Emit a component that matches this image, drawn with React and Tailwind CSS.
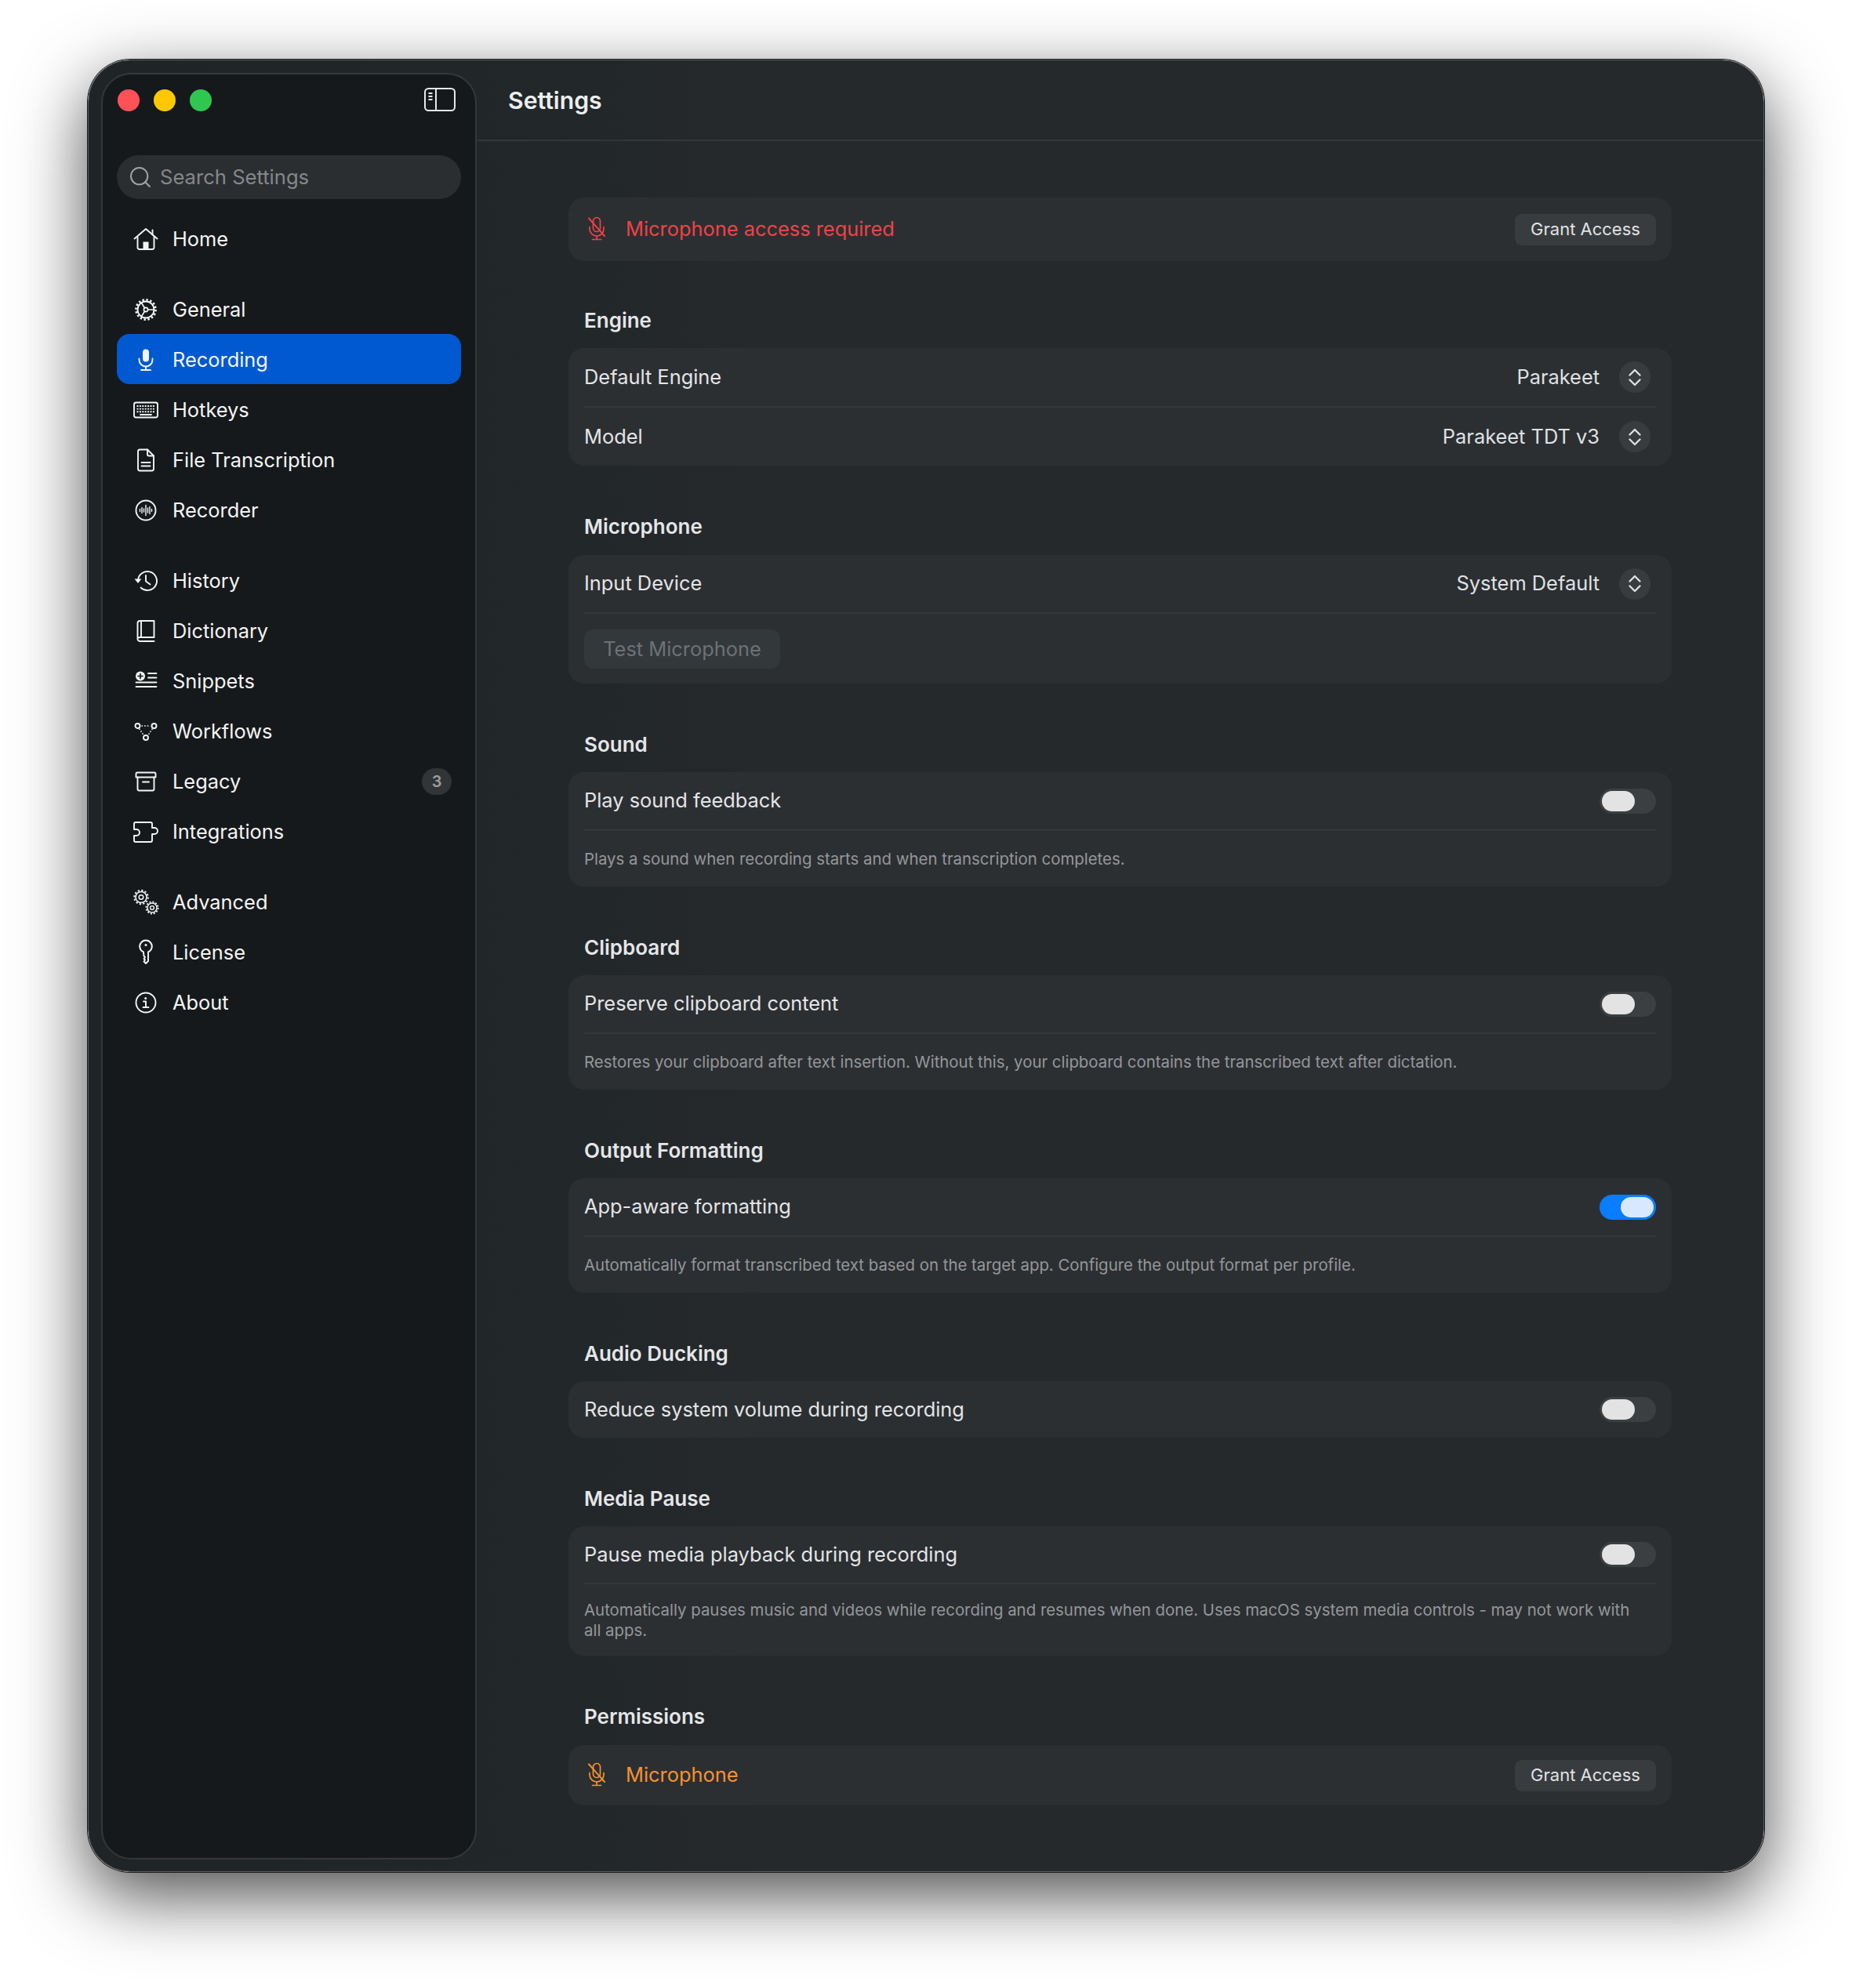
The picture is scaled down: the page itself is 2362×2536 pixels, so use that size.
import React from 'react';
import { Search } from 'lucide-react';

// every icon is drawn in a 34x34 box, centred on the sidebar's icon column
const Ico = ({ children, className = 'w-[34px] h-[34px]' }) => (
  <svg viewBox="0 0 34 34" fill="none" stroke="currentColor" strokeWidth="1.9" strokeLinecap="round" strokeLinejoin="round" className={className}>
    {children}
  </svg>
);

const HomeIcon = () => (
  <Ico>
    <path d="M2.5 16.5 17 4l14.5 12.5" />
    <path d="M6.5 14v13.5a2.5 2.5 0 0 0 2.5 2.5h16a2.5 2.5 0 0 0 2.5-2.5V14" />
    <path d="M25.5 5.5v6" />
    <rect x="13.5" y="20.5" width="7" height="9.5" fill="currentColor" stroke="none" />
  </Ico>
);

const GeneralIcon = () => (
  <Ico>
    <circle cx="17" cy="17" r="10.5" />
    <circle cx="17" cy="17" r="12.6" strokeWidth="2.6" strokeDasharray="2.4 2.55" strokeLinecap="butt" />
    <circle cx="17" cy="17" r="2.6" strokeWidth="1.6" />
    <path d="M11.5 8.5 15.6 15M11.5 25.5l4.1-6.5M19.6 17H27" strokeWidth="1.6" />
  </Ico>
);

const MicIcon = () => (
  <Ico>
    <rect x="13" y="3.5" width="8" height="16" rx="4" fill="currentColor" stroke="none" />
    <path d="M8.5 15.5v1.5a8.5 8.5 0 0 0 17 0v-1.5" />
    <path d="M17 25.5v4M11 30h12" />
  </Ico>
);

const KeyboardIcon = () => (
  <Ico>
    <rect x="2" y="7.5" width="30" height="19" rx="2.5" />
    <path d="M5.5 12h23M5.5 15.6h23M5.5 19.2h23" strokeWidth="1.9" strokeDasharray="2 1.4" strokeLinecap="butt" />
    <path d="M10 23h14" strokeWidth="1.8" />
  </Ico>
);

const FileIcon = () => (
  <Ico>
    <path d="M19 3.5H9.5A2.5 2.5 0 0 0 7 6v22a2.5 2.5 0 0 0 2.5 2.5h15A2.5 2.5 0 0 0 27 28V11.5L19 3.5Z" />
    <path d="M19 3.5v6a2 2 0 0 0 2 2h6" />
    <path d="M11.5 20h11M11.5 24.5h11" />
  </Ico>
);

const RecorderIcon = () => (
  <Ico>
    <circle cx="17" cy="17" r="12.5" />
    <path d="M9.5 15.5v3M12 13.5v7M14.5 15v4M17 10.5v13M19.5 14v6M22 12.5v9M24.5 15.5v3" strokeWidth="1.4" />
  </Ico>
);

const HistoryIcon = () => (
  <Ico>
    <path d="M7 17a12 12 0 1 1 3.6 8.6" />
    <path d="M2.5 14.5h9L7 20Z" fill="currentColor" stroke="none" />
    <path d="M17 10v7.5l5.5 4" />
  </Ico>
);

const BookIcon = () => (
  <Ico>
    <path d="M6.5 26.5V7a3 3 0 0 1 3-3h18v21H9.5a3 3 0 0 0-3 1.5 3 3 0 0 0 3 3.5h18" />
    <path d="M11 4v21" />
  </Ico>
);

const SnippetsIcon = () => (
  <Ico>
    <circle cx="10" cy="10.5" r="6" fill="currentColor" stroke="none" />
    <path d="M10 7.5v6M7 10.5h6" stroke="#16191b" strokeWidth="1.7" />
    <path d="M20 7h10.5M20 12.5h10.5M4.5 18.5h26M4.5 24h26" strokeWidth="1.8" />
  </Ico>
);

const WorkflowIcon = () => (
  <Ico>
    <circle cx="6.5" cy="10" r="3" />
    <circle cx="27.5" cy="10" r="3" />
    <circle cx="17" cy="25" r="3" />
    <path d="M11.5 10h11M8.5 13.5l5.5 8M25.5 13.5l-5.5 8" strokeWidth="1.5" strokeDasharray="1.6 2" strokeLinecap="butt" />
  </Ico>
);

const ArchiveIcon = () => (
  <Ico>
    <path d="M4.5 11.5V7A1.5 1.5 0 0 1 6 5.5h22A1.5 1.5 0 0 1 29.5 7v4.5Z" />
    <path d="M6.5 11.5v15a2 2 0 0 0 2 2h17a2 2 0 0 0 2-2v-15" />
    <path d="M13 17.5h8" />
  </Ico>
);

const PuzzleIcon = () => (
  <Ico>
    <path d="M2 12V7a2 2 0 0 1 2-2h19a2 2 0 0 1 2 2v5h3a3.8 3.8 0 0 1 0 8h-3v8a2 2 0 0 1-2 2H4a2 2 0 0 1-2-2v-6h3a4 4 0 0 0 0-8H2Z" />
  </Ico>
);

const TwoGearsIcon = () => (
  <Ico>
    <circle cx="11" cy="10.5" r="7" strokeWidth="1.6" />
    <circle cx="11" cy="10.5" r="8.8" strokeWidth="1.9" strokeDasharray="2.2 2.4" strokeLinecap="butt" />
    <circle cx="11" cy="10.5" r="2.8" strokeWidth="1.5" />
    <circle cx="25" cy="24" r="6" strokeWidth="1.5" />
    <circle cx="25" cy="24" r="7.6" strokeWidth="1.8" strokeDasharray="2 2" strokeLinecap="butt" />
    <circle cx="25" cy="24" r="2.4" strokeWidth="1.4" />
  </Ico>
);

const KeyIcon = () => (
  <Ico>
    <path d="M14 16.5a7.8 7.8 0 1 1 6 0V28l-3 3-2.5-2.5 1.5-2-1.5-1.500 1.500-2-1.500-1.500Z" />
    <circle cx="17" cy="7.500" r="1.500" fill="currentColor" stroke="none" />
  </Ico>
);

const InfoIcon = () => (
  <Ico>
    <circle cx="17" cy="17" r="12.500" />
    <circle cx="16.700" cy="11.500" r="1.500" fill="currentColor" stroke="none" />
    <path d="M14 15.500h3v7.500M13.500 23h7" />
  </Ico>
);

const MicOffIcon = () => (
  <Ico>
    <rect x="12.500" y="2.500" width="9" height="18" rx="4.500" strokeWidth="1.700" />
    <path d="M8 14.500v2.500a9 9 0 0 0 18 0v-2.500" strokeWidth="1.700" />
    <path d="M17 26v4M11.500 30.500h11" strokeWidth="1.700" />
    <path d="M7 3.500l20 22.500" strokeWidth="1.900" />
  </Ico>
);

const NAV = [
  [
    { label: 'Home', icon: HomeIcon },
  ],
  [
    { label: 'General', icon: GeneralIcon },
    { label: 'Recording', icon: MicIcon, active: true },
    { label: 'Hotkeys', icon: KeyboardIcon },
    { label: 'File Transcription', icon: FileIcon },
    { label: 'Recorder', icon: RecorderIcon },
  ],
  [
    { label: 'History', icon: HistoryIcon },
    { label: 'Dictionary', icon: BookIcon },
    { label: 'Snippets', icon: SnippetsIcon },
    { label: 'Workflows', icon: WorkflowIcon },
    { label: 'Legacy', icon: ArchiveIcon, badge: 3 },
    { label: 'Integrations', icon: PuzzleIcon },
  ],
  [
    { label: 'Advanced', icon: TwoGearsIcon },
    { label: 'License', icon: KeyIcon },
    { label: 'About', icon: InfoIcon },
  ],
];

const NavItem = ({ item }) => {
  const Icon = item.icon;
  return (
    <div className={`flex items-center h-[64px] pt-[2px] pl-[20px] pr-[12px] rounded-[16px] text-[25.4px] text-[#f4f5f5] ${item.active ? 'bg-[#0059d0]' : ''}`}>
      <span className="w-[34px] flex justify-center shrink-0"><Icon /></span>
      <span className="ml-[17px] flex-1">{item.label}</span>
      {item.badge && (
        <span className="w-[38px] h-[34px] rounded-full bg-[#313538] text-[#9b9ea0] text-[20px] font-semibold flex items-center justify-center">{item.badge}</span>
      )}
    </div>
  );
};

const Sidebar = () => (
  <aside className="w-[479px] h-[2279px] shrink-0 rounded-[38px] border-2 border-[#33383a] bg-[#16191b] px-[18px] flex flex-col">
    <div className="h-[103px] shrink-0 relative flex items-center pl-[1px] gap-[18px] pb-[38px]">
      <span className="w-[28px] h-[28px] rounded-full bg-[#ff5257]" />
      <span className="w-[28px] h-[28px] rounded-full bg-[#ffc803]" />
      <span className="w-[28px] h-[28px] rounded-full bg-[#2fc750]" />
      <svg viewBox="0 0 40 30" fill="none" stroke="#e6e7e8" strokeWidth="2" className="absolute right-[7px] top-[17px] w-[40px] h-[30px]">
        <rect x="1" y="1" width="38" height="28" rx="4.500" />
        <path d="M15 1v28" />
        <path d="M5.500 7h5M5.500 11h5M5.500 15h5" strokeWidth="1.800" />
      </svg>
    </div>
    <div className="h-[56px] shrink-0 rounded-full bg-[#2b2e31] flex items-center pl-[14px] text-[25.6px] text-[#85888b] mb-[18px]">
      <Search className="w-[32px] h-[32px] text-[#a0a3a5]" strokeWidth={1.500} />
      <span className="ml-[9px]">Search Settings</span>
    </div>
    <div className="flex flex-col gap-[26px]">
      {NAV.map((group, i) => (
        <div key={i} className="flex flex-col">
          {group.map(item => <NavItem key={item.label} item={item} />)}
        </div>
      ))}
    </div>
  </aside>
);

const Card = ({ children }) => (
  <div className="rounded-[20px] bg-[#2c2f32] px-[20px]">{children}</div>
);

const Row = ({ label, children, divider, height = 'h-[75px]' }) => (
  <div className={`flex items-center justify-between ${height} ${divider ? 'border-b-2 border-[#35383b]' : ''}`}>
    <span className="text-[25.4px] text-[#e3e5e6]">{label}</span>
    {children}
  </div>
);

const Stepper = ({ value }) => (
  <div className="flex items-center">
    <span className="text-[25.4px] text-[#dfe1e3]">{value}</span>
    <span className="ml-[25px] mr-[7px] w-[40px] h-[40px] rounded-full bg-[#393c3f] flex items-center justify-center text-[#dfe1e3]">
      <svg viewBox="0 0 16 23" fill="none" stroke="currentColor" strokeWidth="2.300" strokeLinecap="round" strokeLinejoin="round" className="w-[16px] h-[23px]">
        <path d="M1.500 8.500 8 2l6.500 6.500M1.500 14.500 8 21l6.500-6.500" />
      </svg>
    </span>
  </div>
);

const Toggle = ({ on }) => (
  <span className={`w-[72px] h-[32px] rounded-full flex items-center px-[3px] ${on ? 'bg-[#0a7cff] justify-end' : 'bg-[#3c3f42] justify-start'}`}>
    <span className={`w-[42px] h-[26px] rounded-full ${on ? 'bg-[#d8e9ff]' : 'bg-[#e3e3e3]'}`} />
  </span>
);

const Desc = ({ children, tight }) => (
  <p className={`pr-[20px] text-[20.4px] leading-[26px] text-[#94979a] ${tight ? 'pt-[20px] pb-[19px]' : 'pt-[23px] pb-[22px]'}`}>{children}</p>
);

const Section = ({ title, children, gap = 'mb-[19px]' }) => (
  <section>
    <h2 className={`h-[32px] pl-[20px] text-[26px] leading-[32px] font-semibold text-[#e4e6e8] ${gap}`}>{title}</h2>
    {children}
  </section>
);

const GrantButton = () => (
  <button className="w-[180px] h-[40px] rounded-[9px] bg-[#393c3f] text-[22px] text-[#e0e2e3]">Grant Access</button>
);

const AccessRow = ({ label, className, height }) => (
  <Card>
    <div className={`flex items-center justify-between ${height}`}>
      <span className={`flex items-center ${className}`}>
        <span className="w-[34px] -ml-[1px] flex justify-center"><MicOffIcon /></span>
        <span className="ml-[20px] text-[25.4px]">{label}</span>
      </span>
      <GrantButton />
    </div>
  </Card>
);

const Settings = () => (
  <main className="flex-1 min-w-0 h-[2312px] -mt-[16px]">
    <header className="h-[103px] border-b-2 border-[#34373a] flex items-center pl-[40px] pt-[3px]">
      <h1 className="text-[30.2px] font-semibold text-[#eceeef]">Settings</h1>
    </header>
    <div className="pl-[117px] pr-[117px] pt-[72px] flex flex-col gap-[62px]">
      <div className="-mb-[2px]">
        <AccessRow label="Microphone access required" className="text-[#ef4345]" height="h-[81px]" />
      </div>
      <Section title="Engine">
        <Card>
          <Row label="Default Engine" divider height="h-[76px]"><Stepper value="Parakeet" /></Row>
          <Row label="Model" height="h-[74px]"><Stepper value="Parakeet TDT v3" /></Row>
        </Card>
      </Section>
      <Section title="Microphone" gap="mb-[20px]">
        <Card>
          <Row label="Input Device" divider><Stepper value="System Default" /></Row>
          <div className="pt-[20px] pb-[19px]">
            <button className="w-[250px] h-[50px] rounded-[12px] bg-[#33383b] text-[25.4px] text-[#6d7275]">Test Microphone</button>
          </div>
        </Card>
      </Section>
      <Section title="Sound">
        <Card>
          <Row label="Play sound feedback" divider><Toggle /></Row>
          <Desc>Plays a sound when recording starts and when transcription completes.</Desc>
        </Card>
      </Section>
      <Section title="Clipboard">
        <Card>
          <Row label="Preserve clipboard content" divider><Toggle /></Row>
          <Desc>Restores your clipboard after text insertion. Without this, your clipboard contains the transcribed text after dictation.</Desc>
        </Card>
      </Section>
      <Section title="Output Formatting">
        <Card>
          <Row label="App-aware formatting" divider><Toggle on /></Row>
          <Desc>Automatically format transcribed text based on the target app. Configure the output format per profile.</Desc>
        </Card>
      </Section>
      <Section title="Audio Ducking">
        <Card>
          <Row label="Reduce system volume during recording" height="h-[72px]"><Toggle /></Row>
        </Card>
      </Section>
      <Section title="Media Pause">
        <Card>
          <Row label="Pause media playback during recording" divider height="h-[74px]"><Toggle /></Row>
          <Desc tight>Automatically pauses music and videos while recording and resumes when done. Uses macOS system media controls - may not work with all apps.</Desc>
        </Card>
      </Section>
      <Section title="Permissions" gap="mb-[20px]">
        <AccessRow label="Microphone" className="text-[#f6922f]" height="h-[77px]" />
      </Section>
    </div>
  </main>
);

export default function App() {
  return (
    <div className="w-[2362px] h-[2536px] bg-white pt-[76px] pl-[112px] font-['Inter',sans-serif] overflow-hidden">
      <div className="w-[2138px] h-[2312px] rounded-[54px] border border-[#595d5f] shadow-[0_0_0_1px_#1a1a1a,0_30px_90px_rgba(0,0,0,0.7)] bg-[linear-gradient(90deg,#1f2527_0%,#22272a_30%,#26292c_40%)] flex pl-[16px] pt-[16px] overflow-hidden">
        <Sidebar />
        <Settings />
      </div>
    </div>
  );
}
